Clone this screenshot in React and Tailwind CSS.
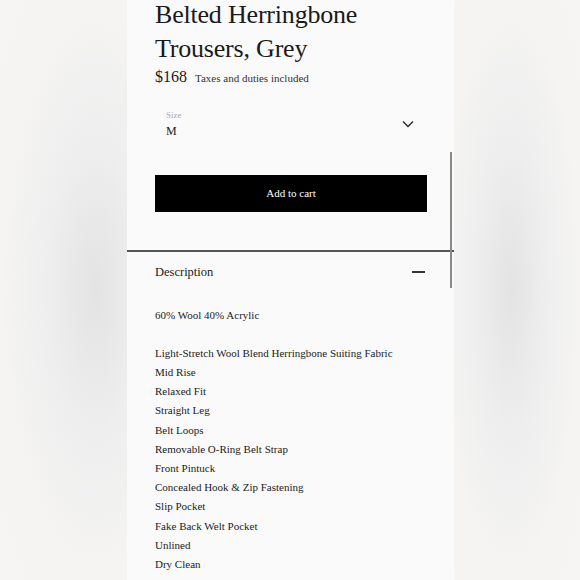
const details = [
  "Light-Stretch Wool Blend Herringbone Suiting Fabric",
  "Mid Rise",
  "Relaxed Fit",
  "Straight Leg",
  "Belt Loops",
  "Removable O-Ring Belt Strap",
  "Front Pintuck",
  "Concealed Hook & Zip Fastening",
  "Slip Pocket",
  "Fake Back Welt Pocket",
  "Unlined",
  "Dry Clean",
];

export default function App() {
  return (
    <div
      className="w-[580px] h-[580px] flex overflow-hidden text-[#1a1a1a]"
      style={{ fontFamily: '"Liberation Serif", "DejaVu Serif", serif' }}
    >
      <div className="h-full w-[127px] bg-[radial-gradient(ellipse_at_75%_50%,#e3e3e3_0%,#eeeeee_35%,#f5f4f3_70%,#f7f5f4_100%)]" />
      <div className="relative w-[327px] h-full bg-[#fafafa] flex flex-col">
        {/* scrollbar */}
        <div className="absolute left-[323px] top-[152px] w-[2px] h-[136px] bg-[#8a8a8a]" />

        <div className="pl-[28px] pr-[27px]">
          <h1 className="text-[26px] leading-[34px] tracking-[-0.2px] -mt-[2px]">
            Belted Herringbone
            <br />
            Trousers, Grey
          </h1>
          <div className="flex items-baseline gap-[8px] -mt-[1px]">
            <span className="text-[16px]">$168</span>
            <span className="text-[11px] text-[#333]">Taxes and duties included</span>
          </div>

          <div className="mt-[20px] pl-[11px] pr-[12px] flex items-center justify-between">
            <div className="flex flex-col">
              <span className="text-[9px] leading-[12px] text-[#aaa]">Size</span>
              <span className="text-[12px] leading-[16px] mt-[2px]">M</span>
            </div>
            <svg width="12" height="8" viewBox="0 0 12 8" className="mr-[1px]">
              <path d="M1 1.5 L6 6.5 L11 1.5" fill="none" stroke="#222" strokeWidth="1.3" />
            </svg>
          </div>

          <button className="mt-[36px] w-full h-[37px] bg-black text-white text-[11px] flex items-center justify-center">
            Add to cart
          </button>
        </div>

        <div className="mt-[38px] w-full h-[1.5px] bg-[#555]" />

        <div className="pl-[28px] pr-[27px]">
          <div className="flex items-center justify-between h-[41px]">
            <span className="text-[12.5px]">Description</span>
            <div className="w-[13px] h-[1.5px] bg-[#333] mr-[2px]" />
          </div>
          <p className="mt-[13px] text-[11px] leading-[19.2px]">60% Wool 40% Acrylic</p>
          <ul className="mt-[19px] text-[11px] leading-[19.2px]">
            {details.map((d) => (
              <li key={d}>{d}</li>
            ))}
          </ul>
        </div>
      </div>
      <div className="h-full w-[126px] bg-[radial-gradient(ellipse_at_45%_50%,#e3e3e3_0%,#eeeeee_35%,#f5f4f3_70%,#f7f5f4_100%)]" />
    </div>
  );
}
